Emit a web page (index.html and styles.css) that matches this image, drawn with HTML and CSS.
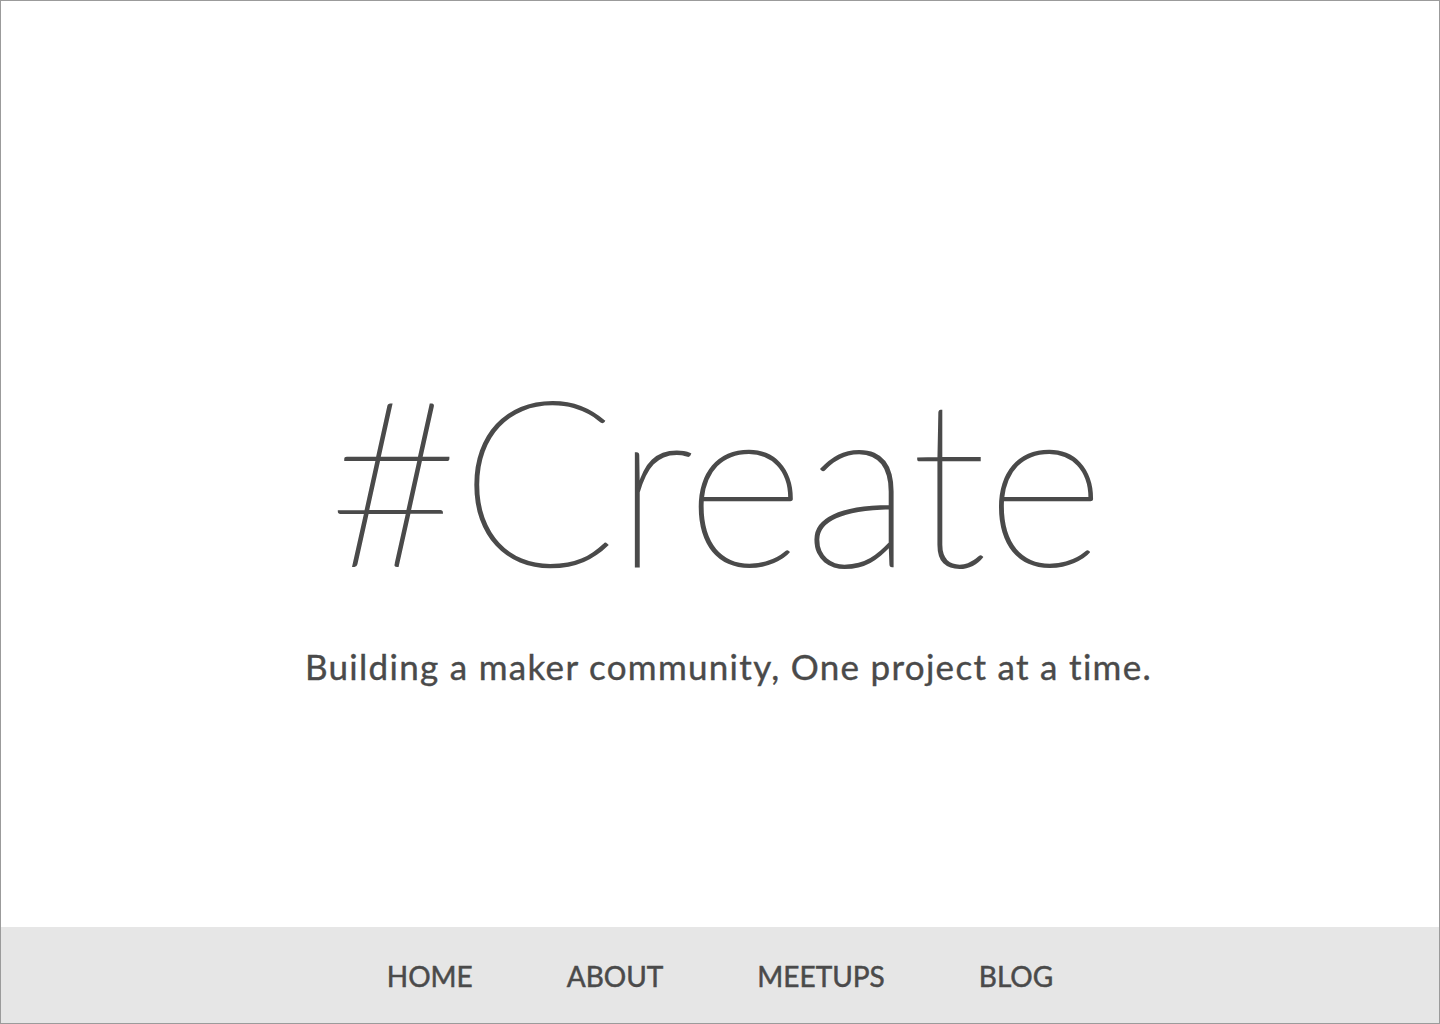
FILE: index.html
```html
<!DOCTYPE html>
<html lang="en">
<head>
<meta charset="utf-8">
<title>#Create</title>
<link rel="stylesheet" href="styles.css">
</head>
<body>
<div class="frame">
  <main class="hero">
    <h1 class="title">#Create</h1>
    <p class="tagline">Building a maker community, One project at a time.</p>
  </main>
  <nav class="nav">
    <a href="#" class="nav-link">HOME</a>
    <a href="#" class="nav-link">ABOUT</a>
    <a href="#" class="nav-link">MEETUPS</a>
    <a href="#" class="nav-link">BLOG</a>
  </nav>
</div>
</body>
</html>
```
FILE: styles.css
```css
* { box-sizing: border-box; }
html, body { margin: 0; padding: 0; }
body {
  background: #ffffff;
  font-family: "Lato", "Noto Sans", sans-serif;
  color: #4a4a4a;
}
.frame {
  width: 1440px;
  height: 1024px;
  border: 1px solid #9b9b9b;
  display: flex;
  flex-direction: column;
}
.hero {
  flex: 1;
  display: flex;
  flex-direction: column;
  align-items: center;
  padding-top: 361px;
}
.title {
  margin: 0;
  padding-right: 9px;
  font-weight: 100;
  font-size: 230px;
  line-height: 1;
  letter-spacing: -0.5px;
  color: #4a4a4a;
  -webkit-text-stroke: 2.1px #4a4a4a;
}
.tagline {
  margin: 53px 0 0;
  padding-left: 17px;
  font-size: 35px;
  font-weight: 400;
  letter-spacing: 1.3px;
  color: #4a4a4a;
  -webkit-text-stroke: 0.4px #4a4a4a;
}
.nav {
  height: 96px;
  background: #e6e6e6;
  display: flex;
  justify-content: center;
  align-items: center;
  gap: 94px;
}
.nav-link {
  font-size: 28px;
  font-weight: 400;
  color: #4a4a4a;
  text-decoration: none;
  -webkit-text-stroke: 0.5px #4a4a4a;
  padding-top: 1px;
}
```
